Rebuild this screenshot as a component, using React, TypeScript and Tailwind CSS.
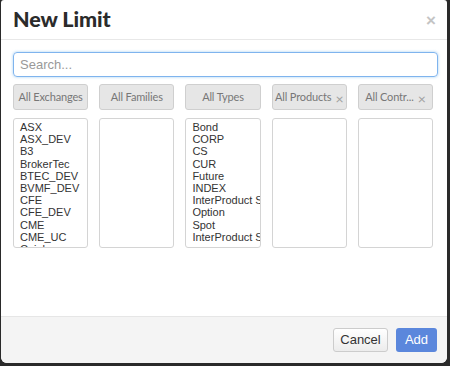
import React from 'react';

const filters = [
  { label: 'All Exchanges', clear: false },
  { label: 'All Families', clear: false },
  { label: 'All Types', clear: false },
  { label: 'All Products', clear: true },
  { label: 'All Contr...', clear: true },
];

const lists: string[][] = [
  ['ASX', 'ASX_DEV', 'B3', 'BrokerTec', 'BTEC_DEV', 'BVMF_DEV', 'CFE', 'CFE_DEV', 'CME', 'CME_UC', 'Cuiuhy'],
  [],
  ['Bond', 'CORP', 'CS', 'CUR', 'Future', 'INDEX', 'InterProduct Spread', 'Option', 'Spot', 'InterProduct Strategy'],
  [],
  [],
];

const App: React.FC = () => {
  return (
    <div className="w-[450px] h-[366px] bg-[#2a2a2a] pl-[1px] pr-[3px] pb-[3px] font-['Liberation_Sans',Arial,sans-serif]">
      <div className="h-full bg-white rounded-t-[3px] rounded-b-[6px] overflow-hidden flex flex-col">
        {/* Header */}
        <div className="h-[40px] shrink-0 border-b border-[#e8e8e8] flex items-center justify-between pl-[12px] pr-[11px]">
          <h1 className="text-[21.5px] text-[#2b2b2b] tracking-[-0.1px] font-['Lato','Liberation_Sans',sans-serif] font-black">
            New Limit
          </h1>
          <span className="text-[17px] leading-none font-bold text-[#c4c4c4] mt-[1px]">×</span>
        </div>

        {/* Body */}
        <div className="flex-1 px-[12px] pt-[12px]">
          <div className="h-[25px] w-[425px] border border-[#7fb4ee] rounded-[4px] shadow-[0_0_3px_rgba(102,175,233,0.6)] flex items-center px-[6px]">
            <span className="text-[13px] text-[#999]">Search...</span>
          </div>

          <div className="mt-[7px] w-[420px] grid grid-cols-5 gap-x-[11px]">
            {filters.map((f) => (
              <div
                key={f.label}
                className="h-[26px] bg-[#e6e6e6] border border-[#cfcfcf] rounded-[3px] flex items-center justify-center gap-[4px] text-[11px] tracking-[-0.15px] text-[#777] font-['Lato','Liberation_Sans',sans-serif] whitespace-nowrap"
              >
                <span>{f.label}</span>
                {f.clear && <span className="text-[14px] leading-none text-[#a0a0a0] mt-[3px]">×</span>}
              </div>
            ))}
          </div>

          <div className="mt-[8px] w-[420px] grid grid-cols-5 gap-x-[11px]">
            {lists.map((items, i) => (
              <div
                key={i}
                className="h-[130px] border border-[#d4d4d4] rounded-[3px] overflow-hidden pl-[6px] pt-[2px]"
              >
                {items.map((it) => (
                  <div key={it} className="text-[11px] leading-[12.2px] text-[#333] whitespace-nowrap">
                    {it}
                  </div>
                ))}
              </div>
            ))}
          </div>
        </div>

        {/* Footer */}
        <div className="h-[47px] shrink-0 bg-[#f4f4f4] border-t border-[#e6e6e6] flex items-center justify-end gap-[8px] pr-[10px]">
          <button className="h-[24px] w-[55px] rounded-[3px] border border-[#cccccc] bg-gradient-to-b from-white to-[#ececec] text-[13px] text-[#333]">
            Cancel
          </button>
          <button className="h-[24px] w-[41px] rounded-[3px] bg-[#5b87dc] text-[13px] text-white">
            Add
          </button>
        </div>
      </div>
    </div>
  );
};

export default App;
